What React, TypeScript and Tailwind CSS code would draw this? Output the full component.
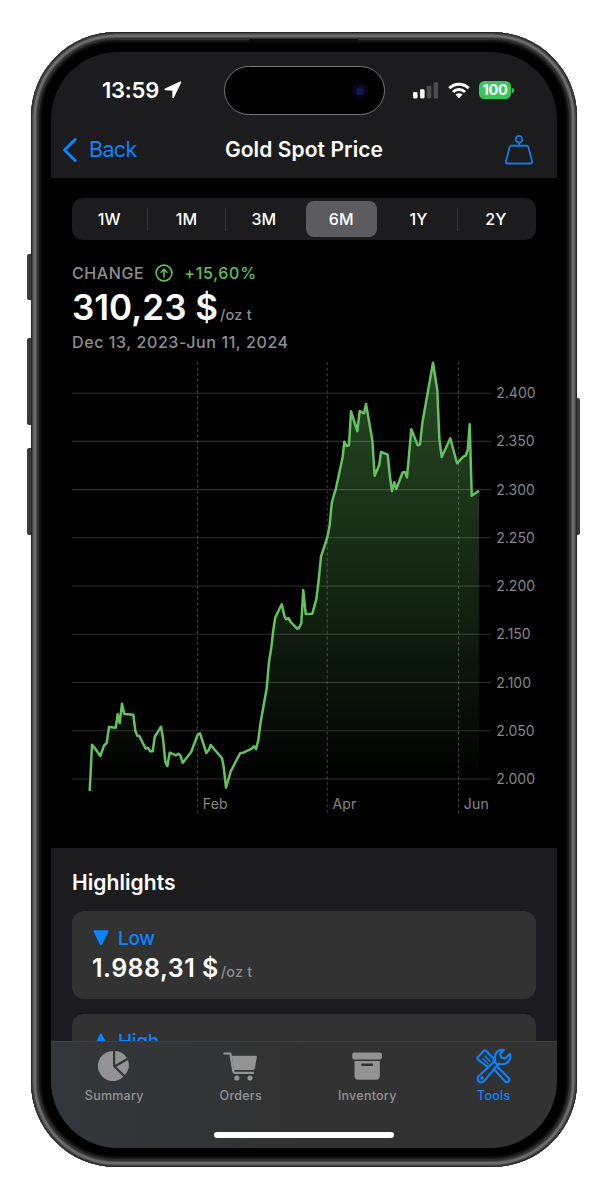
import React from 'react';
import clsx from 'clsx';

const ranges = ['1W', '1M', '3M', '6M', '1Y', '2Y'];

const gridLines = [
  { label: '2.400', y: 393.2 },
  { label: '2.350', y: 441.4 },
  { label: '2.300', y: 489.6 },
  { label: '2.250', y: 537.8 },
  { label: '2.200', y: 586 },
  { label: '2.150', y: 634.2 },
  { label: '2.100', y: 682.5 },
  { label: '2.050', y: 730.7 },
  { label: '2.000', y: 779 },
];

const months = [
  { label: 'Feb', x: 197.6 },
  { label: 'Apr', x: 327.2 },
  { label: 'Jun', x: 458.6 },
];

const line =
  '89.7,791 92,744.7 95,748.3 100.3,756 104,745.7 106.7,743 109,727 115.7,727.7 117.7,714.3 119.7,723 122,703.7 124.3,714 133.3,714.7 135.3,730.7 137.3,735.7 139.3,736 145.7,748.7 148,747.7 150.3,751.3 152.7,751.3 154.7,737 161,726.7 163,738.3 165.3,761.7 167.3,766 169.7,752.7 176,755.3 178.3,753.7 180.3,755.3 182.7,762.7 191,752.3 195.3,741 197.7,734.7 200,733.3 206.3,753 208.7,750 210.7,745 222,758.3 223.7,767 226,787.7 230.7,771.3 240.3,753 243.3,752.7 251.7,748.7 254,746.3 256,749 258.3,740 260.7,721.7 266.7,688.3 269,661.7 271.3,647.7 273.3,630 275.3,617.3 281.8,604.3 284.3,615.7 286,619.3 288.3,618 290.7,622 297,628.7 299,628 301.3,623.3 303.3,590 305.7,614 312.3,613.7 316.3,599.3 318.7,580 321,556.7 327.3,537.5 329.7,525 331.7,503.3 334,494.7 336,488.3 342.7,456.7 344.3,441.7 346.7,446 349,445 351,411.3 357.3,431 359.7,411 364,413.3 366,404 372.3,440 374.7,475.7 379.3,464.7 381,452 387.7,454.7 390,477.3 392,491 394.3,482.3 396.3,489 402.7,472.3 405.3,472.3 407,477.3 411.3,429.3 417.7,445.3 420,444.3 422.3,423.3 433,362.7 437.3,390 439.3,438.3 441.7,457 450.3,438.3 457,463.3 463.3,456.7 465.7,455.7 467.7,450 469.7,424.3 471.7,495.7 479,490.7';

function StatusBar() {
  return (
    <div className="relative flex h-[76px] items-center justify-between pl-[51px] pr-[43px]">
      <div className="flex items-center gap-[5px]">
        <span className="text-[22px] font-semibold leading-none tracking-[-0.25px]">13:59</span>
        <svg width="18" height="18" viewBox="0 0 18 18" fill="#fff" stroke="#fff" strokeWidth="1.8" strokeLinejoin="round">
          <path d="M1.4 8.4 16.4 1.2 9.2 16.2V8.8Z" />
        </svg>
      </div>
      <div className="absolute left-[173px] top-[14px] flex h-[49px] w-[161px] items-center justify-end rounded-full border border-[#77777a] bg-black pr-[16px]">
        <div className="flex size-4 items-center justify-center rounded-full bg-[#070719]">
          <div className="size-2 rounded-full bg-[#141650]" />
        </div>
      </div>
      <div className="flex items-center">
        <svg width="26" height="17" viewBox="0 0 26 17" className="mr-[9px]">
          <rect x="0" y="10" width="4.6" height="6.5" rx="1.4" fill="#fff" />
          <rect x="7" y="7.3" width="4.6" height="9.2" rx="1.4" fill="#fff" />
          <rect x="13.8" y="3.8" width="4.6" height="12.7" rx="1.4" fill="#4b4b4d" />
          <rect x="20.6" y="0.3" width="4.6" height="16.2" rx="1.4" fill="#4b4b4d" />
        </svg>
        <svg width="22" height="17" viewBox="0 0 22 17" fill="none" stroke="#fff" strokeWidth="3" className="mr-[9px]">
          <path d="M1.3 6.2a13.8 13.8 0 0 1 19.4 0" />
          <path d="M5 10a8.6 8.6 0 0 1 12 0" />
          <path d="M7.5 12.6a5 5 0 0 1 7 0L11 16.2Z" fill="#fff" stroke="none" />
        </svg>
        <div className="flex h-[18px] w-[32px] items-center justify-center rounded-[5.5px] bg-[#34c759] text-[14.5px] font-bold leading-none tracking-[-0.2px]">
          100
        </div>
        <div className="ml-px h-[5px] w-[2px] rounded-r-full bg-[#34c759]" />
      </div>
    </div>
  );
}

function NavBar() {
  return (
    <div className="grid h-[50px] grid-cols-[1fr_auto_1fr] items-center pl-[11px] pr-[23px]">
      <div className="flex items-center gap-[11px] pb-[6px] text-[#0a84ff]">
        <svg width="16" height="26" viewBox="0 0 16 26" fill="none" stroke="currentColor" strokeWidth="3" strokeLinecap="round" strokeLinejoin="round">
          <path d="M13.2 2.5 2.5 13l10.7 10.5" />
        </svg>
        <span className="text-[21.5px] leading-none tracking-[-0.65px]">Back</span>
      </div>
      <h1 className="ml-[12px] pb-[7px] text-[21px] font-semibold leading-none tracking-[0.08px]">Gold Spot Price</h1>
      <svg width="30" height="32" viewBox="0 0 30 32" fill="none" stroke="#1478e2" strokeWidth="1.9" strokeLinejoin="round" className="mb-[6px] justify-self-end">
        <circle cx="15" cy="5.2" r="3.3" />
        <path d="M15 8.5v3M7.6 11.8h14.8q1.5 0 2 1.5l3.6 13.6q.5 2.6-1.8 2.6H3.8q-2.3 0-1.8-2.6l3.6-13.6q.5-1.5 2-1.5Z" />
      </svg>
    </div>
  );
}

function RangePicker() {
  return (
    <div className="grid h-[42px] w-[464px] grid-cols-6 rounded-[11px] bg-[#1c1c1f] py-[3px]">
      {ranges.map((r, i) => (
        <div
          key={r}
          className={clsx(
            'relative flex items-center justify-center pr-[3px] text-[16px] font-medium',
            r === '6M' && 'ml-[2px] mr-[4px] rounded-[8px] bg-[#5b5b60] pl-[2px]',
          )}
        >
          {r}
          {(i < 2 || i === 4) && <span className="absolute right-px h-[23px] w-px bg-[#38383b]" />}
        </div>
      ))}
    </div>
  );
}

function PriceChart() {
  return (
    <svg width="464" height="462" viewBox="72 359 464 462" fontSize="14" fill="#86868a" className="block">
      <defs>
        <linearGradient id="area" x1="0" y1="362" x2="0" y2="791" gradientUnits="userSpaceOnUse">
          <stop offset="0" stopColor="#66c35e" stopOpacity="0.38" />
          <stop offset="0.5" stopColor="#66c35e" stopOpacity="0.2" />
          <stop offset="1" stopColor="#66c35e" stopOpacity="0" />
        </linearGradient>
      </defs>
      <polygon points={`${line} 479,791`} fill="url(#area)" />
      {gridLines.map((g) => (
        <g key={g.label}>
          <line x1="72" x2="491" y1={g.y} y2={g.y} stroke="#fff" strokeOpacity="0.18" strokeWidth="1.1" />
          <text x="496.3" y={g.y + 5}>{g.label}</text>
        </g>
      ))}
      {months.map((m) => (
        <g key={m.label}>
          <line x1={m.x} x2={m.x} y1="362" y2="813" stroke="#fff" strokeOpacity="0.26" strokeDasharray="3 2.6" />
          <text x={m.x + 5.2} y="809" letterSpacing="0.2">{m.label}</text>
        </g>
      ))}
      <polyline points={line} fill="none" stroke="#66c160" strokeWidth="2.5" strokeLinejoin="round" />
    </svg>
  );
}

function HighlightCard({ label, value, up }: { label: string; value?: string; up?: boolean }) {
  return (
    <div className="h-[88px] w-[464px] rounded-[12px] bg-[#323232] pl-[20px] pt-[16px]">
      <div className="flex h-[22px] items-center gap-[8px] text-[#0a84ff]">
        <svg width="18" height="18" viewBox="0 0 18 18" fill="currentColor" className={clsx(up && 'rotate-180')}>
          <path d="M2.4 1.3h13.2q1.3.2.8 1.5L10 15.8q-1 1.3-2 0L1.6 2.8q-.5-1.3.8-1.5Z" />
        </svg>
        <span className="text-[19px] font-medium leading-none tracking-[-0.3px]">{label}</span>
      </div>
      {value && (
        <div className="flex items-baseline whitespace-nowrap leading-[38px]">
          <span className="text-[25px] font-semibold tracking-[0.45px]">{value}</span>
          <span className="ml-[2px] text-[14.5px] font-medium tracking-[0.2px] text-[#8e8e93]">/oz t</span>
        </div>
      )}
    </div>
  );
}

const tabs = [
  {
    name: 'Summary',
    icon: (
      <svg width="34" height="34" viewBox="0 0 34 34" fill="currentColor">
        <path d="M16 2a15 15 0 1 0 10.3 25.8L16 17.6Z" />
        <path d="M18.2 2v13.8L30 9A15 15 0 0 0 18.2 2ZM31 11.1 19.4 17.7l8.4 8.4A15 15 0 0 0 31 11.1Z" />
      </svg>
    ),
  },
  {
    name: 'Orders',
    icon: (
      <svg width="34" height="34" viewBox="0 0 34 34" fill="currentColor" className="-ml-[2px]">
        <path d="M1.3 4.5h6l3 17.6q.3 1.8 2 1.8H30" fill="none" stroke="currentColor" strokeWidth="2.2" strokeLinecap="round" />
        <path d="M8.7 6.8h24q1.3 0 1.1 1.3l-1.8 11q-.3 1.8-2 1.8H11Z" />
        <circle cx="13.8" cy="29" r="2.6" />
        <circle cx="27" cy="29" r="2.6" />
      </svg>
    ),
  },
  {
    name: 'Inventory',
    icon: (
      <svg width="34" height="34" viewBox="0 0 34 34" fill="currentColor">
        <rect x="2.3" y="3.4" width="29.6" height="7" rx="2" />
        <path fillRule="evenodd" d="M4.5 12h25.3v14.8q0 4-4 4H8.5q-4 0-4-4ZM12 14.5q-.7 0-.7.7v1q0 .7.7.7h10.4q.7 0 .7-.7v-1q0-.7-.7-.7Z" />
      </svg>
    ),
  },
  {
    name: 'Tools',
    active: true,
    icon: (
      <svg width="38" height="38" viewBox="0 0 38 38" fill="none" stroke="currentColor" strokeWidth="2.1" strokeLinecap="round" strokeLinejoin="round">
        <path d="M2.9 10.3 8.6 3.9q1.2-1.1 2.5.1l7.2 7.3q1 1.2.3 2.6l-.3 2 15.2 14.8q1.8 2 .1 3.8-1.9 1.7-3.8-.2L16 18.9l-2.2.5q-1.4.4-2.5-.6L3 12.6q-1.2-1.1-.1-2.3Z" />
        <path d="m7.9 11.8 5 5M10.2 9.4l4.7 4.7" strokeWidth="1.6" />
        <path
          d="M28.8 2.9q-4.7-.6-7.2 2.6-2.3 3-1.2 6.5.2 1-.5 1.9L3.6 29.2q-2 3.1.2 5.2 2.8 2.3 5.3-.3l13.8-16.6q.7-.8 1.8-.6 4.6 1.3 8.2-1.8 3.5-3.3 2-8.2l-4.7 4.6-4.1-1-1-4.1Z"
          fill="#323232"
        />
        <path d="m19.1 14.5 4.1 3.6" />
        <circle cx="7" cy="31" r="0.8" fill="currentColor" />
      </svg>
    ),
  },
];

function TabBar() {
  return (
    <div className="flex h-[107px] flex-col items-center justify-between border-t border-[#404042] bg-linear-to-r from-[#33373a] via-[#323232] via-50% to-[#323232] pb-[10px]">
      <div className="grid w-full grid-cols-4 pt-px">
        {tabs.map((t) => (
          <div key={t.name} className={clsx('flex flex-col items-center', t.active ? 'text-[#0a84ff]' : 'text-[#939393]')}>
            <div className="flex h-[45px] items-center pb-px pt-px">{t.icon}</div>
            <span className="text-[12.5px] font-medium leading-[16px] tracking-[0.25px]">{t.name}</span>
          </div>
        ))}
      </div>
      <div className="h-[6px] w-[180px] rounded-full bg-white" />
    </div>
  );
}

export default function App() {
  return (
    <div className="flex h-[1200px] w-[609px] bg-white pl-[31px] pt-[32px] font-['Inter','Liberation_Sans',sans-serif] text-white">
      <div className="relative h-[1135px] w-[546px]">
        <div className="absolute -left-[4px] top-[222px] h-[46px] w-[6px] rounded-l-[2px] bg-[#3a3a3a]" />
        <div className="absolute -left-[4px] top-[306px] h-[87px] w-[6px] rounded-l-[2px] bg-[#3a3a3a]" />
        <div className="absolute -left-[4px] top-[416px] h-[87px] w-[6px] rounded-l-[2px] bg-[#3a3a3a]" />
        <div className="absolute -right-[3px] top-[366px] h-[137px] w-[6px] rounded-r-[2px] bg-[#3a3a3a]" />

        <div className="relative h-full rounded-[85px] bg-black p-[20px] shadow-[inset_0_0_0_1px_#272727,inset_0_0_0_2.5px_#464646,inset_0_0_0_5px_#6c6c6c,inset_0_0_0_6px_#4c4c4c,inset_0_0_0_8px_#303030,inset_0_0_2px_10px_#1a1a1a]">
          <div className="absolute left-[218px] top-[7px] h-[3px] w-[109px] rounded-b-[3px] bg-[#0c0c0c]" />
          <div className="flex h-[1096px] flex-col overflow-hidden rounded-[67px] bg-black">
            <header className="h-[126px] shrink-0 bg-[#1c1c1e]">
              <StatusBar />
              <NavBar />
            </header>

            <main className="min-h-0 flex-1 overflow-hidden">
              <div className="h-[670px] px-[21px] pt-[20px]">
                <RangePicker />
                <div className="mt-[22px] flex h-[22px] items-center text-[16px] font-medium">
                  <span className="tracking-[0.6px] text-[#8e8e93]">CHANGE</span>
                  <svg width="18" height="18" viewBox="0 0 18 18" fill="none" stroke="#5fc257" strokeWidth="1.6" strokeLinecap="round" strokeLinejoin="round" className="ml-[11px] mr-[11px]">
                    <circle cx="9" cy="9" r="7.9" />
                    <path d="M9 12.9V5.4M6.1 8.2 9 5.3l2.9 2.9" />
                  </svg>
                  <span className="tracking-[0.7px] text-[#5fc257]">+15,60%</span>
                </div>
                <div className="-mt-px flex h-[48px] items-baseline whitespace-nowrap leading-[48px]">
                  <span className="text-[35px] font-semibold">310,23 $</span>
                  <span className="ml-[2px] text-[14.5px] font-medium tracking-[0.2px] text-[#8e8e93]">/oz t</span>
                </div>
                <div className="h-[28px] whitespace-nowrap text-[16px] font-medium leading-[22px] tracking-[0.6px] text-[#8e8e93]">
                  Dec 13, 2023-Jun 11, 2024
                </div>
                <PriceChart />
              </div>

              <section className="bg-[#1c1c1e] px-[21px] pt-[23px]">
                <h2 className="mb-[16px] text-[21px] font-semibold leading-[24px] tracking-[0.08px]">Highlights</h2>
                <div className="flex flex-col gap-[15px]">
                  <HighlightCard label="Low" value="1.988,31 $" />
                  <HighlightCard label="High" up />
                </div>
              </section>
            </main>

            <TabBar />
          </div>
        </div>
      </div>
    </div>
  );
}
